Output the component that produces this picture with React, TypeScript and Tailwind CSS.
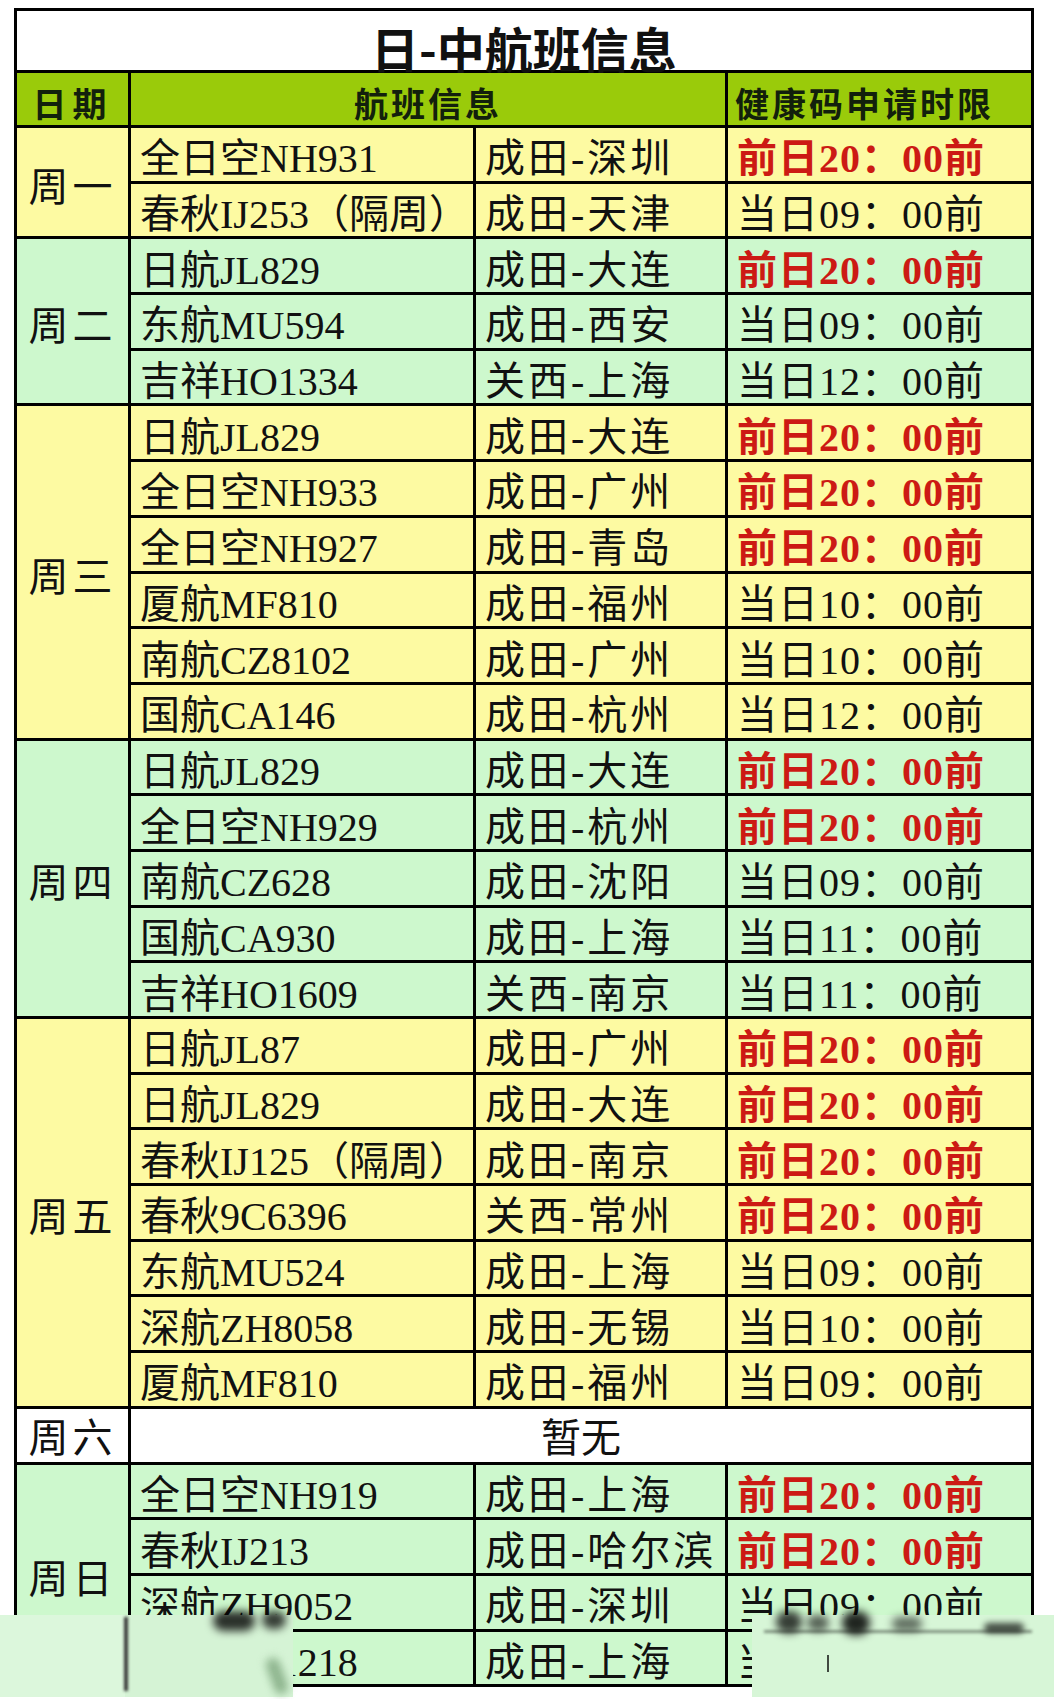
type Flight = { flight: string; route: string; time: string; red?: boolean };
type Day = { day: string; bg: string; rows: Flight[] };

const RED = "前日20：00前";

const days: Day[] = [
  {
    day: "周一",
    bg: "bg-[#fdfaa2]",
    rows: [
      { flight: "全日空NH931", route: "成田-深圳", time: RED, red: true },
      { flight: "春秋IJ253（隔周）", route: "成田-天津", time: "当日09：00前" },
    ],
  },
  {
    day: "周二",
    bg: "bg-[#cdf8cd]",
    rows: [
      { flight: "日航JL829", route: "成田-大连", time: RED, red: true },
      { flight: "东航MU594", route: "成田-西安", time: "当日09：00前" },
      { flight: "吉祥HO1334", route: "关西-上海", time: "当日12：00前" },
    ],
  },
  {
    day: "周三",
    bg: "bg-[#fdfaa2]",
    rows: [
      { flight: "日航JL829", route: "成田-大连", time: RED, red: true },
      { flight: "全日空NH933", route: "成田-广州", time: RED, red: true },
      { flight: "全日空NH927", route: "成田-青岛", time: RED, red: true },
      { flight: "厦航MF810", route: "成田-福州", time: "当日10：00前" },
      { flight: "南航CZ8102", route: "成田-广州", time: "当日10：00前" },
      { flight: "国航CA146", route: "成田-杭州", time: "当日12：00前" },
    ],
  },
  {
    day: "周四",
    bg: "bg-[#cdf8cd]",
    rows: [
      { flight: "日航JL829", route: "成田-大连", time: RED, red: true },
      { flight: "全日空NH929", route: "成田-杭州", time: RED, red: true },
      { flight: "南航CZ628", route: "成田-沈阳", time: "当日09：00前" },
      { flight: "国航CA930", route: "成田-上海", time: "当日11：00前" },
      { flight: "吉祥HO1609", route: "关西-南京", time: "当日11：00前" },
    ],
  },
  {
    day: "周五",
    bg: "bg-[#fdfaa2]",
    rows: [
      { flight: "日航JL87", route: "成田-广州", time: RED, red: true },
      { flight: "日航JL829", route: "成田-大连", time: RED, red: true },
      { flight: "春秋IJ125（隔周）", route: "成田-南京", time: RED, red: true },
      { flight: "春秋9C6396", route: "关西-常州", time: RED, red: true },
      { flight: "东航MU524", route: "成田-上海", time: "当日09：00前" },
      { flight: "深航ZH8058", route: "成田-无锡", time: "当日10：00前" },
      { flight: "厦航MF810", route: "成田-福州", time: "当日09：00前" },
    ],
  },
];

const sunday: Day = {
  day: "周日",
  bg: "bg-[#cdf8cd]",
  rows: [
    { flight: "全日空NH919", route: "成田-上海", time: RED, red: true },
    { flight: "春秋IJ213", route: "成田-哈尔滨", time: RED, red: true },
    { flight: "深航ZH9052", route: "成田-深圳", time: "当日09：00前" },
    { flight: "吉祥HO1218", route: "成田-上海", time: "当日09：00前" },
  ],
};

const cell =
  "flex h-[52.7px] items-center whitespace-nowrap pl-[9px] pt-[10px] text-[40px] leading-none";

function DayGroup({ d }: { d: Day }) {
  return (
    <div className="flex gap-[3px]">
      <div
        className={`flex w-[111px] shrink-0 items-center justify-center pt-[12px] text-[40px] leading-none tracking-[4px] ${d.bg}`}
      >
        {d.day}
      </div>
      <div className="flex flex-1 flex-col gap-[3px]">
        {d.rows.map((r, i) => (
          <div key={i} className="flex gap-[3px]">
            <div className={`${cell} w-[342px] ${d.bg}`}>{r.flight}</div>
            <div className={`${cell} w-[249px] tracking-[3px] ${d.bg}`}>{r.route}</div>
            <div
              className={`${cell} flex-1 tracking-[1px] ${d.bg} ${r.red ? "font-bold text-[#cc1a14]" : ""}`}
            >
              {r.time}
            </div>
          </div>
        ))}
      </div>
    </div>
  );
}

export default function App() {
  return (
    <div className="relative h-[1699px] w-[1054px] overflow-hidden bg-white pl-[14px] pt-[8px] font-['Liberation_Serif','Noto_Sans_CJK_SC',serif] text-[#111]">
      <div className="flex w-[1020px] flex-col gap-[3px] bg-black p-[3px]">
        <div className="flex h-[59px] items-center justify-center bg-white pt-[12px] font-['Noto_Sans_CJK_SC',sans-serif] text-[48px] font-bold leading-none">
          日-中航班信息
        </div>

        <div className="flex h-[52px] gap-[3px] font-['Noto_Sans_CJK_SC',sans-serif] text-[34px] font-bold leading-none tracking-[3px] text-[#12200c]">
          <div className="flex w-[111px] items-center justify-center bg-[#9acb0a] pt-[8px] tracking-[6px]">
            日期
          </div>
          <div className="flex w-[594px] items-center justify-center bg-[#9acb0a] pt-[8px]">
            航班信息
          </div>
          <div className="flex flex-1 items-center bg-[#9acb0a] pl-[7px] pt-[8px]">
            健康码申请时限
          </div>
        </div>

        {days.map((d) => (
          <DayGroup key={d.day} d={d} />
        ))}

        <div className="flex h-[52.7px] gap-[3px] text-[40px] leading-none">
          <div className="flex w-[111px] items-end justify-center bg-white pb-[3px] tracking-[4px]">
            周六
          </div>
          <div className="flex flex-1 items-end justify-center bg-white pb-[3px]">暂无</div>
        </div>

        <DayGroup d={sunday} />
      </div>

      {/* smudged cover patches at the bottom */}
      <div className="absolute left-0 top-[1615px] h-[82px] w-[293px] bg-[#dcf7dc]">
        <div className="absolute left-[125px] top-0 h-[82px] w-[168px] bg-[#d5f3d5]" />
        <div className="absolute left-[124px] top-[2px] h-[74px] w-[4px] bg-[#3a3a3a] blur-[1.5px]" />
        <div className="absolute left-[213px] top-[-4px] h-[20px] w-[42px] rounded-full bg-black/80 blur-[4px]" />
        <div className="absolute left-[262px] top-[-4px] h-[18px] w-[24px] rounded-full bg-black/75 blur-[4px]" />
        <div className="absolute left-[270px] top-[42px] h-[38px] w-[14px] rotate-[-20deg] rounded-full bg-[#6f9a6f]/70 blur-[4px]" />
      </div>

      <div className="absolute left-[752px] top-[1615px] h-[82px] w-[302px] bg-[#d7f6d7]">
        <div className="absolute left-[12px] top-[15px] h-[3px] w-[268px] bg-black/40 blur-[1.5px]" />
        <div className="absolute left-[24px] top-[-4px] h-[22px] w-[26px] rounded-full bg-black/75 blur-[4px]" />
        <div className="absolute left-[55px] top-[0px] h-[16px] w-[22px] rounded-full bg-black/60 blur-[4px]" />
        <div className="absolute left-[90px] top-[-4px] h-[24px] w-[28px] rounded-full bg-black/85 blur-[4px]" />
        <div className="absolute left-[140px] top-[2px] h-[14px] w-[30px] rounded-full bg-black/55 blur-[4px]" />
        <div className="absolute left-[232px] top-[8px] h-[10px] w-[40px] rounded-full bg-black/70 blur-[3px]" />
        <div className="absolute left-[75px] top-[40px] h-[17px] w-[2px] bg-black/70 blur-[0.6px]" />
      </div>
    </div>
  );
}
